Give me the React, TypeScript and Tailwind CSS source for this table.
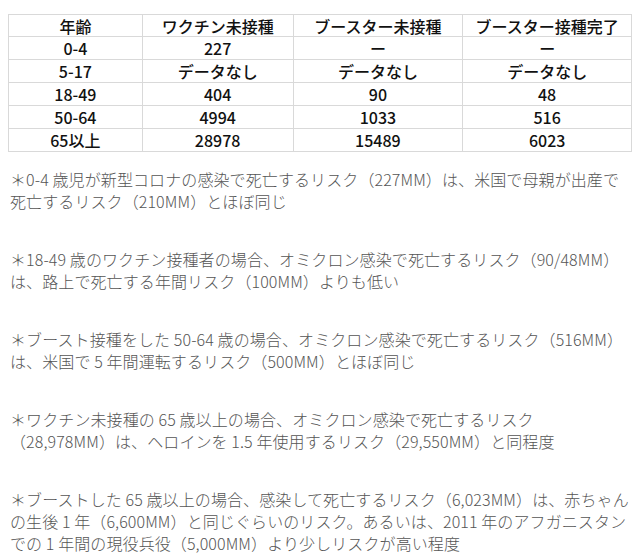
const rows = [
  ["0-4", "227", "ー", "ー"],
  ["5-17", "データなし", "データなし", "データなし"],
  ["18-49", "404", "90", "48"],
  ["50-64", "4994", "1033", "516"],
  ["65以上", "28978", "15489", "6023"],
];

const notes = [
  [
    "＊0-4 歳児が新型コロナの感染で死亡するリスク（227MM）は、米国で母親が出産で",
    "死亡するリスク（210MM）とほぼ同じ",
  ],
  [
    "＊18-49 歳のワクチン接種者の場合、オミクロン感染で死亡するリスク（90/48MM）",
    "は、路上で死亡する年間リスク（100MM）よりも低い",
  ],
  [
    "＊ブースト接種をした 50-64 歳の場合、オミクロン感染で死亡するリスク（516MM）",
    "は、米国で 5 年間運転するリスク（500MM）とほぼ同じ",
  ],
  [
    "＊ワクチン未接種の 65 歳以上の場合、オミクロン感染で死亡するリスク",
    "（28,978MM）は、ヘロインを 1.5 年使用するリスク（29,550MM）と同程度",
  ],
  [
    "＊ブーストした 65 歳以上の場合、感染して死亡するリスク（6,023MM）は、赤ちゃん",
    "の生後 1 年（6,600MM）と同じぐらいのリスク。あるいは、2011 年のアフガニスタン",
    "での 1 年間の現役兵役（5,000MM）より少しリスクが高い程度",
  ],
];

export default function App() {
  return (
    <div className="w-[640px] h-[560px] bg-white overflow-hidden font-['Noto_Sans_CJK_JP',sans-serif]">
      <div className="pt-[14px] px-[8px]">
        <table className="border-collapse text-[16px] font-medium text-[#111] leading-none">
          <thead>
            <tr className="h-[22px]">
              <th className="w-[134px] border border-[#d9d9d9] font-medium">年齢</th>
              <th className="w-[151px] border border-[#d9d9d9] font-medium">ワクチン未接種</th>
              <th className="w-[170px] border border-[#d9d9d9] font-medium">ブースター未接種</th>
              <th className="w-[169px] border border-[#d9d9d9] font-medium">ブースター接種完了</th>
            </tr>
          </thead>
          <tbody>
            {rows.map((r) => (
              <tr key={r[0]} className="h-[23px]">
                {r.map((c, i) => (
                  <td key={i} className="border border-[#d9d9d9] text-center">
                    {c}
                  </td>
                ))}
              </tr>
            ))}
          </tbody>
        </table>
      </div>
      <div className="pt-[16px] pl-[10px] flex flex-col gap-[36px] text-[16px] font-light leading-[22px] text-[#555] tracking-[0.1px]">
        {notes.map((n, i) => (
          <div key={i}>
            {n.map((line) => (
              <div key={line} className="whitespace-nowrap">
                {line}
              </div>
            ))}
          </div>
        ))}
      </div>
    </div>
  );
}
